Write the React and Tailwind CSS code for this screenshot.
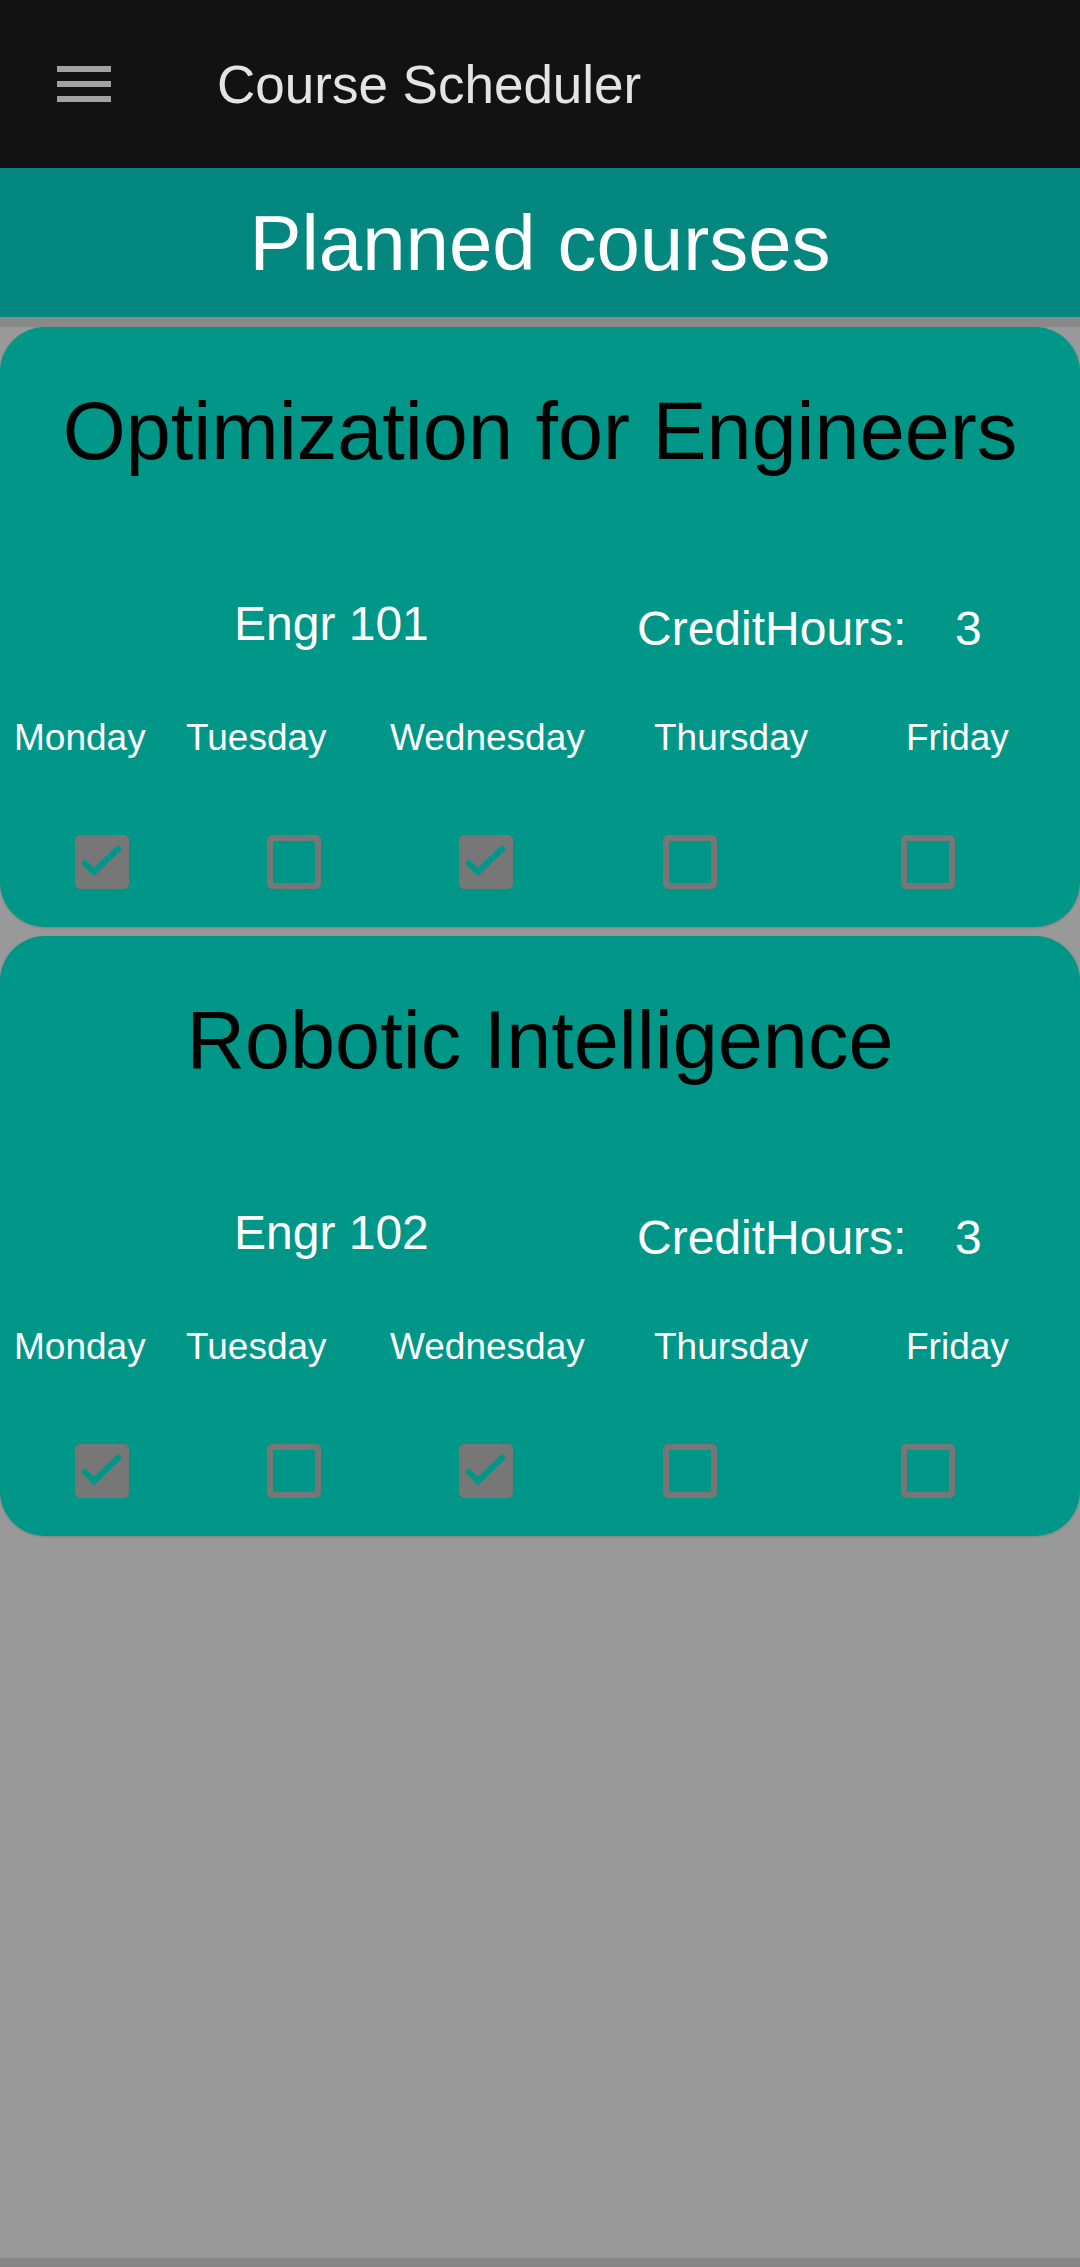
import React from "react";

const days = [
  { name: "Monday", cell: "w-[186px] pl-[14px]" },
  { name: "Tuesday", cell: "w-[204px]" },
  { name: "Wednesday", cell: "w-[264px]" },
  { name: "Thursday", cell: "w-[252px]" },
  { name: "Friday", cell: "flex-1" },
];

const boxCells = [
  "w-[267px] pl-[75px]",
  "w-[192px]",
  "w-[204px]",
  "w-[238px]",
  "flex-1",
];

function Checkbox({ checked }) {
  if (checked) {
    return (
      <div className="w-[54px] h-[54px] rounded-[5px] bg-[#777777] flex items-center justify-center">
        <svg width="54" height="54" viewBox="0 0 54 54">
          <polyline
            points="8,26 19,37 45,12"
            fill="none"
            stroke="#009688"
            strokeWidth="6"
            strokeLinecap="butt"
            strokeLinejoin="miter"
          />
        </svg>
      </div>
    );
  }
  return <div className="w-[54px] h-[54px] rounded-[5px] border-[6px] border-[#777777]" />;
}

function CourseCard({ title, code, hours, checks }) {
  return (
    <div className="w-full bg-[#009688] rounded-[45px] pt-[64px] pb-[38px] shadow-sm">
      <div className="text-center text-black text-[81px] leading-none whitespace-nowrap">{title}</div>
      <div className="mt-[128px] h-[48px] flex items-start text-white text-[48px] leading-none">
        <div className="w-[637px] pl-[234px] whitespace-nowrap">{code}</div>
        <div className="w-[318px] mt-[5px] whitespace-nowrap">CreditHours:</div>
        <div className="mt-[5px]">{hours}</div>
      </div>
      <div className="mt-[71px] flex text-white text-[37px] leading-none">
        {days.map((d) => (
          <div key={d.name} className={`${d.cell} whitespace-nowrap`}>
            {d.name}
          </div>
        ))}
      </div>
      <div className="mt-[79px] flex">
        {checks.map((c, i) => (
          <div key={i} className={boxCells[i]}>
            <Checkbox checked={c} />
          </div>
        ))}
      </div>
    </div>
  );
}

export default function App() {
  return (
    <div className="w-[1080px] h-[2267px] flex flex-col bg-[#999999] font-['Liberation_Sans',Arial,sans-serif] overflow-hidden">
      <header className="h-[168px] bg-[#121212] flex items-center shrink-0">
        <div className="ml-[57px] w-[54px] flex flex-col gap-[9px]">
          <div className="h-[6px] bg-[#a3a3a3]" />
          <div className="h-[6px] bg-[#a3a3a3]" />
          <div className="h-[6px] bg-[#a3a3a3]" />
        </div>
        <div className="ml-[106px] text-[53px] text-[#e4e4e4] leading-none">Course Scheduler</div>
      </header>
      <div className="h-[149px] bg-[#04877f] flex items-center justify-center shrink-0">
        <div className="text-white text-[78px] leading-none">Planned courses</div>
      </div>
      <div className="h-[10px] bg-[#898989] shrink-0" />
      <div className="flex flex-col gap-[9px]">
        <CourseCard
          title="Optimization for Engineers"
          code="Engr 101"
          hours="3"
          checks={[true, false, true, false, false]}
        />
        <CourseCard
          title="Robotic Intelligence"
          code="Engr 102"
          hours="3"
          checks={[true, false, true, false, false]}
        />
      </div>
      <div className="flex-1" />
      <div className="h-[9px] bg-[#868686] shrink-0" />
    </div>
  );
}
